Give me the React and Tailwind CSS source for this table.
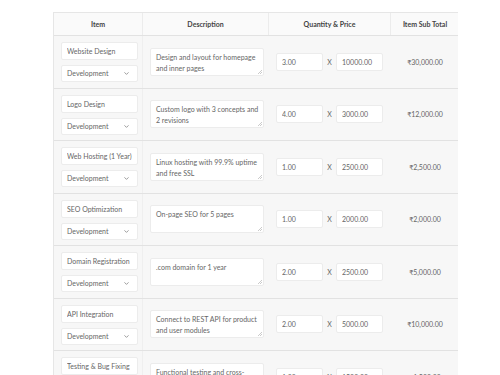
import React from 'react';
import { ChevronDown } from 'lucide-react';

const items = [
  { name: 'Website Design', desc: 'Design and layout for homepage and inner pages', qty: '3.00', price: '10000.00', total: '₹30,000.00' },
  { name: 'Logo Design', desc: 'Custom logo with 3 concepts and 2 revisions', qty: '4.00', price: '3000.00', total: '₹12,000.00' },
  { name: 'Web Hosting (1 Year)', desc: 'Linux hosting with 99.9% uptime and free SSL', qty: '1.00', price: '2500.00', total: '₹2,500.00' },
  { name: 'SEO Optimization', desc: 'On-page SEO for 5 pages', qty: '1.00', price: '2000.00', total: '₹2,000.00' },
  { name: 'Domain Registration', desc: '.com domain for 1 year', qty: '2.00', price: '2500.00', total: '₹5,000.00' },
  { name: 'API Integration', desc: 'Connect to REST API for product and user modules', qty: '2.00', price: '5000.00', total: '₹10,000.00' },
  { name: 'Testing & Bug Fixing', desc: 'Functional testing and cross-browser fixes', qty: '1.00', price: '1500.00', total: '₹1,500.00' },
];

const cols = 'grid grid-cols-[89px_126px_122px_68px]';
const field = 'bg-white border border-[#ececec] rounded-[2px] text-[#666] outline-none';

const App = () => {
  return (
    <div className="w-[500px] h-[375px] overflow-hidden bg-white pl-[53px] pt-[12px] font-['Lato','Noto_Sans',sans-serif] text-[7px]">
      <div className="w-[405px] border-t border-l border-[#e6e6e6] bg-[#f7f7f7]">
        {/* Header */}
        <div className={`${cols} h-[23px] bg-[#fafafa] border-b border-[#e2e2e2] font-bold text-[#444]`}>
          <div className="flex items-center justify-center border-r border-[#ececec]">Item</div>
          <div className="flex items-center justify-center border-r border-[#ececec]">Description</div>
          <div className="flex items-center justify-center border-r border-[#ececec]">Quantity &amp; Price</div>
          <div className="flex items-center justify-center">Item Sub Total</div>
        </div>

        {/* Rows */}
        {items.map((it, idx) => (
          <div key={idx} className={`${cols} h-[52.5px] border-b border-[#e2e2e2]`}>
            <div className="pl-[7px] pt-[6px] flex flex-col gap-[5px] border-r border-[#efefef]">
              <input readOnly value={it.name} className={`${field} w-[77px] h-[18px] px-[5px]`} />
              <div className={`${field} w-[77px] h-[17px] px-[5px] flex items-center justify-between`}>
                <span>Development</span>
                <ChevronDown className="w-[7px] h-[7px] text-[#777] mr-[2px]" strokeWidth={2.5} />
              </div>
            </div>
            <div className="pl-[7px] flex items-center">
              <div className="relative">
                <textarea
                  readOnly
                  value={it.desc}
                  className={`${field} block w-[114px] h-[28px] pl-[5px] pr-[3px] pt-[3px] leading-[11px] overflow-hidden resize-none`}
                />
                <svg className="absolute right-[2px] bottom-[2px] w-[4px] h-[4px]" viewBox="0 0 4 4">
                  <path d="M4 0L0 4M4 2L2 4" stroke="#b5b5b5" strokeWidth="0.7" />
                </svg>
              </div>
            </div>
            <div className="pl-[7px] flex items-center">
              <input readOnly value={it.qty} className={`${field} w-[47px] h-[18px] px-[5px]`} />
              <span className="w-[13px] text-center text-[#666]">X</span>
              <input readOnly value={it.price} className={`${field} w-[47px] h-[18px] px-[5px]`} />
            </div>
            <div className="flex items-center justify-center text-[#666]">{it.total}</div>
          </div>
        ))}
      </div>
    </div>
  );
};

export default App;
